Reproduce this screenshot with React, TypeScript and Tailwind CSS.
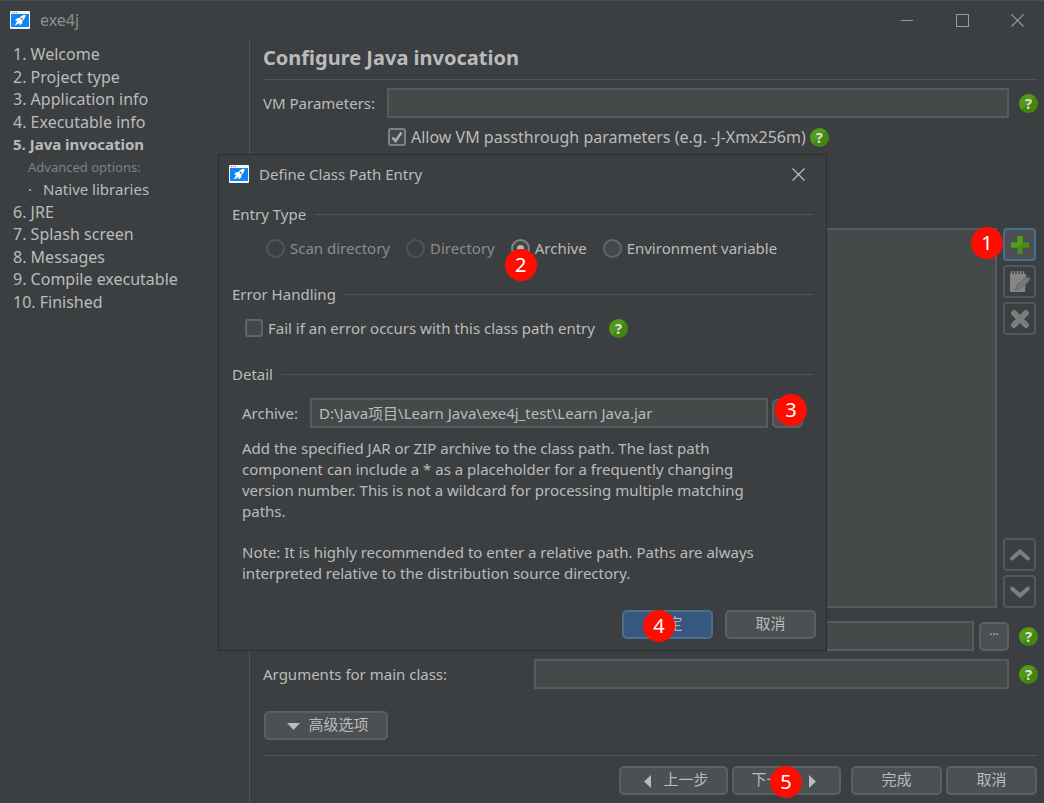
import { ReactNode } from 'react'
import clsx from 'clsx'

const steps = [
  { label: '1. Welcome' },
  { label: '2. Project type' },
  { label: '3. Application info' },
  { label: '4. Executable info' },
  { label: '5. Java invocation', kind: 'current' },
  { label: 'Advanced options:', kind: 'caption' },
  { label: 'Native libraries', kind: 'sub' },
  { label: '6. JRE' },
  { label: '7. Splash screen' },
  { label: '8. Messages' },
  { label: '9. Compile executable' },
  { label: '10. Finished' },
]

const entryTypes = [
  { label: 'Scan directory', disabled: true },
  { label: 'Directory', disabled: true },
  { label: 'Archive', marker: 2 },
  { label: 'Environment variable' },
]

const inputStyle = 'h-[30px] min-w-0 flex-1 border-2 border-[#585b5d] bg-[#45494a] px-[7px] pb-[2px] outline-none'

function AppIcon() {
  return (
    <svg className="h-[18px] w-5 shrink-0" viewBox="0 0 20 18" aria-hidden="true">
      <rect width="20" height="18" rx="1" fill="#f4f6f8" />
      <rect x="1" y="3" width="18" height="13" fill="#0a86f8" />
      <path d="M2 1.5h1M4 1.5h1M6 1.5h1" stroke="#e8604c" strokeWidth="1" />
      <path d="M2 15 17 4M3 5l13 10" stroke="#3b9dfa" strokeWidth="0.5" />
      <path
        d="M15.5 3.8c-3 .2-4.600 1.200-6 3.200l-2.600.3-1.900 2.500 2.400-.1-1 1.700-1.600 3 3.200-1.400 1.500-.9.100 2.400 2.500-2 .2-2.500c2-1.500 3-3.200 3.200-6.200z"
        fill="#fff"
      />
      <circle cx="11.700" cy="7.800" r="1.100" fill="#e2502f" />
    </svg>
  )
}

function HelpButton() {
  return (
    <button
      type="button"
      aria-label="Help"
      className="flex size-[19px] shrink-0 items-center justify-center rounded-full bg-linear-135 from-[#519a18] from-50% to-[#43860f] to-50% text-[15px] leading-none font-bold text-[#dedede]"
    >
      ?
    </button>
  )
}

function Marker({ n, className }: { n: number; className: string }) {
  return (
    <span
      className={clsx(
        'absolute z-10 flex size-8 items-center justify-center rounded-full bg-[#ff0d00] text-xl leading-none text-white',
        className,
      )}
    >
      {n}
    </span>
  )
}

function Button({ children, className, primary }: { children: ReactNode; className?: string; primary?: boolean }) {
  return (
    <button
      type="button"
      className={clsx(
        'relative flex h-[29px] items-center justify-center rounded-[5px] border-2 pb-[3px]',
        primary ? 'border-[#4c708c] bg-[#365880]' : 'border-[#5e6060] bg-[#4c5052]',
        className,
      )}
    >
      {children}
    </button>
  )
}

function ToolButton({ label, active, children }: { label: string; active?: boolean; children: ReactNode }) {
  return (
    <button
      type="button"
      aria-label={label}
      className={clsx(
        'relative flex size-[33px] items-center justify-center rounded-[4px] border-2',
        active ? 'border-[#466d94] bg-[#4c5052]' : 'border-[#55585a]',
      )}
    >
      {children}
    </button>
  )
}

function CheckBox({ id, label, checked }: { id: string; label: string; checked?: boolean }) {
  return (
    <div className="flex items-center gap-[5px]">
      <span className="relative flex">
        <input
          id={id}
          type="checkbox"
          defaultChecked={checked}
          className="peer size-[18px] appearance-none rounded-[3px] border-2 border-[#626566] bg-[#43494a] checked:border-[#7f8182]"
        />
        <svg
          className="pointer-events-none absolute inset-0 hidden size-[18px] peer-checked:block"
          viewBox="0 0 18 18"
          fill="none"
          stroke="#b0b0b0"
          strokeWidth="2.500"
        >
          <path d="M4.500 9.500l3 3.500L13.500 4.500" />
        </svg>
      </span>
      <label htmlFor={id}>{label}</label>
    </div>
  )
}

function GroupTitle({ children }: { children: ReactNode }) {
  return (
    <div className="flex h-5 items-center gap-2">
      <h3>{children}</h3>
      <div className="h-px flex-1 bg-[#515456]" />
    </div>
  )
}

function CloseIcon() {
  return (
    <svg className="size-[13px]" viewBox="0 0 13 13" fill="none" stroke="currentColor" strokeWidth="1.100">
      <path d="M.5.5l12 12M12.500.5l-12 12" />
    </svg>
  )
}

function ClassPathDialog() {
  return (
    <section
      role="dialog"
      aria-label="Define Class Path Entry"
      className="absolute top-[153px] left-[218px] flex h-[497px] w-[609px] flex-col border border-[#2b2d2e] bg-[#3c3f41] pr-[10px] pl-[13px]"
    >
      <header className="-ml-[3px] flex h-[38px] shrink-0 items-center gap-[10px]">
        <AppIcon />
        <h2 className="flex-1">Define Class Path Entry</h2>
        <button type="button" aria-label="Close dialog" className="mr-[11px] text-[#c0c0c0]">
          <CloseIcon />
        </button>
      </header>

      <div className="mt-[11px] mr-[2px]">
        <GroupTitle>Entry Type</GroupTitle>
        <div className="mt-[14px] ml-[34px] flex h-5 items-center gap-4">
          {entryTypes.map((type) => (
            <div key={type.label} className="relative flex items-center gap-[5px]">
              <input
                id={type.label}
                type="radio"
                name="entry-type"
                disabled={type.disabled}
                defaultChecked={type.label === 'Archive'}
                className="flex size-[19px] appearance-none items-center justify-center rounded-full border-2 border-[#626566] bg-[#43494a] before:size-[7px] before:rounded-full checked:border-[#7f8182] checked:before:bg-[#b8b8b8] disabled:border-[#515456] disabled:bg-transparent"
              />
              <label htmlFor={type.label} className={type.disabled ? 'text-[#8a8c8d]' : ''}>
                {type.label}
              </label>
              {type.marker && <Marker n={type.marker} className="top-[11px] -left-[6px]" />}
            </div>
          ))}
        </div>
      </div>

      <div className="mt-[26px] mr-[2px]">
        <GroupTitle>Error Handling</GroupTitle>
        <div className="mt-[14px] ml-[13px] flex h-5 items-center gap-[14px]">
          <CheckBox id="fail" label="Fail if an error occurs with this class path entry" />
          <HelpButton />
        </div>
      </div>

      <div className="mt-[26px]">
        <div className="mr-[2px]">
          <GroupTitle>Detail</GroupTitle>
        </div>
        <div className="mt-[14px] mr-[13px] ml-[10px] flex items-center">
          <label htmlFor="archive" className="w-[68px]">
            Archive:
          </label>
          <input id="archive" className={inputStyle} defaultValue="D:\Java项目\Learn Java\exe4j_test\Learn Java.jar" />
          <Button className="ml-1 w-[31px]">
            <span className="text-xs leading-none">···</span>
            <Marker n={3} className="-top-[7px] left-[1px]" />
          </Button>
        </div>
        <div className="mt-[10px] ml-[10px] leading-[21px]">
          <p>
            Add the specified JAR or ZIP archive to the class path. The last path
            <br />
            component can include a * as a placeholder for a frequently changing
            <br />
            version number. This is not a wildcard for processing multiple matching
            <br />
            paths.
          </p>
          <p className="mt-5">
            Note: It is highly recommended to enter a relative path. Paths are always
            <br />
            interpreted relative to the distribution source directory.
          </p>
        </div>
      </div>

      <footer className="mt-auto mb-[11px] flex justify-end gap-3">
        <Button primary className="w-[91px]">
          确定
          <Marker n={4} className="-top-[2px] left-[19px]" />
        </Button>
        <Button className="w-[91px]">取消</Button>
      </footer>
    </section>
  )
}

export default function App() {
  return (
    <div className="relative flex min-h-screen flex-col border-t border-[#4b4e50] bg-[#3c3f41] font-['Noto_Sans','Noto_Sans_CJK_SC',sans-serif] text-[15px] leading-5 text-[#bbbbbb]">
      <header className="flex h-[38px] shrink-0 items-center gap-[10px] pr-5 pl-[10px] text-[#8c8e8f]">
        <AppIcon />
        <h1 className="flex-1 text-base">exe4j</h1>
        <div className="flex items-center gap-[42px] text-[#999b9c]">
          <button type="button" aria-label="Minimize" className="flex size-[13px] items-center">
            <span className="h-px w-3 bg-current" />
          </button>
          <button type="button" aria-label="Maximize" className="size-[13px] border border-current" />
          <button type="button" aria-label="Close">
            <CloseIcon />
          </button>
        </div>
      </header>

      <div className="flex flex-1">
        <nav className="w-[250px] shrink-0 border-r border-[#515456] pt-1 pl-[13px]">
          <ol className="grid h-[270px] grid-rows-12 items-center">
            {steps.map((step) => (
              <li
                key={step.label}
                className={clsx(
                  step.kind === 'current' && 'text-[15px] font-bold',
                  step.kind === 'caption' && 'pl-[15px] text-[13px] text-[#7f8182]',
                  step.kind === 'sub' && 'flex gap-[11px] pl-[15px] text-[15px]',
                  !step.kind && 'text-base',
                )}
              >
                {step.kind === 'sub' && <span>·</span>}
                {step.label}
              </li>
            ))}
          </ol>
        </nav>

        <main className="flex min-w-0 flex-1 flex-col pr-[6px] pb-2 pl-[13px]">
          <h2 className="flex h-[41px] items-center border-b border-[#515456] pb-[3px] text-xl font-bold">
            Configure Java invocation
          </h2>

          <div className="mt-2 flex items-center">
            <label htmlFor="vm" className="w-[124px]">
              VM Parameters:
            </label>
            <input id="vm" className={inputStyle} />
            <div className="ml-[10px]">
              <HelpButton />
            </div>
          </div>
          <div className="mt-[9px] ml-[125px] flex h-5 items-center gap-1 text-base">
            <CheckBox id="passthrough" checked label="Allow VM passthrough parameters (e.g. -J-Xmx256m)" />
            <HelpButton />
          </div>

          {/* Class path list with its toolbar */}
          <div className="mt-[81px] mr-[2px] flex flex-1 gap-[6px]">
            <div className="flex-1 border-2 border-[#585b5d] bg-[#45494a]" />
            <div className="flex flex-col gap-1">
              <ToolButton label="Add entry" active>
                <svg className="size-5" viewBox="0 0 20 20">
                  <path d="M7.500 1h5v6.500H19v5h-6.500V19h-5v-6.500H1v-5h6.500z" fill="#4b8f14" />
                  <path d="M7.500 1h5v6.500L7.500 12.500H1v-5h6.500z" fill="#559e1a" />
                </svg>
                <Marker n={1} className="-top-[3px] -left-[34px]" />
              </ToolButton>
              <ToolButton label="Edit entry">
                <svg className="size-[22px]" viewBox="0 0 22 22">
                  <path d="M1 3h16v6l-1 12H1z" fill="#858585" />
                  <path d="M2.500 0v3M5.500 0v3M8.500 0v3M11.500 0v3M14.500 0v3" stroke="#8c8c8c" strokeWidth="1.500" />
                  <path d="M6 19l2-5 9-8 4 1-1 3-9 8z" fill="#777777" stroke="#606262" strokeWidth="0.800" />
                </svg>
              </ToolButton>
              <ToolButton label="Remove entry">
                <svg className="size-5" viewBox="0 0 20 20" stroke="#7d7d7d" strokeWidth="6" strokeLinecap="round">
                  <path d="M4 4l12 12M16 4L4 16" />
                </svg>
              </ToolButton>
              <div className="flex-1" />
              <ToolButton label="Move up">
                <svg className="h-3 w-5" viewBox="0 0 20 12" fill="none" stroke="#7d7d7d" strokeWidth="4" strokeLinecap="round">
                  <path d="M2 9.500l8-7 8 7" />
                </svg>
              </ToolButton>
              <ToolButton label="Move down">
                <svg className="h-3 w-5" viewBox="0 0 20 12" fill="none" stroke="#7d7d7d" strokeWidth="4" strokeLinecap="round">
                  <path d="M2 2.500l8 7 8-7" />
                </svg>
              </ToolButton>
            </div>
          </div>

          <div className="mt-[13px] flex items-center pl-[271px]">
            <input aria-label="Main class" className={inputStyle} />
            <Button className="ml-[5px] w-[30px]">
              <span className="text-xs leading-none">···</span>
            </Button>
            <div className="ml-[10px]">
              <HelpButton />
            </div>
          </div>
          <div className="mt-2 flex items-center">
            <label htmlFor="args" className="w-[271px]">
              Arguments for main class:
            </label>
            <input id="args" className={inputStyle} />
            <div className="ml-[10px]">
              <HelpButton />
            </div>
          </div>

          <Button className="mt-[22px] ml-[1px] w-[124px] gap-2 pl-1">
            <svg className="mt-1 h-[7px] w-[13px]" viewBox="0 0 13 7" fill="#bbbbbb">
              <path d="M0 0h13L6.500 7z" />
            </svg>
            高级选项
          </Button>

          <footer className="mt-[15px] flex justify-end border-t border-[#515456] pt-[10px] pr-[1px]">
            <Button className="w-[109px] gap-3 pl-[6px]">
              <svg className="mt-1 h-[13px] w-[7px]" viewBox="0 0 7 13" fill="#bbbbbb">
                <path d="M7 0v13L0 6.500z" />
              </svg>
              上一步
            </Button>
            <Button className="ml-1 w-[109px] gap-3 pr-[6px]">
              下一步
              <svg className="mt-1 h-[13px] w-[7px]" viewBox="0 0 7 13" fill="#bbbbbb">
                <path d="M0 0v13l7-6.500z" />
              </svg>
              <Marker n={5} className="-top-[2px] left-9" />
            </Button>
            <Button className="ml-[10px] w-[91px]">完成</Button>
            <Button className="ml-1 w-[91px]">取消</Button>
          </footer>
        </main>
      </div>

      <ClassPathDialog />
    </div>
  )
}
